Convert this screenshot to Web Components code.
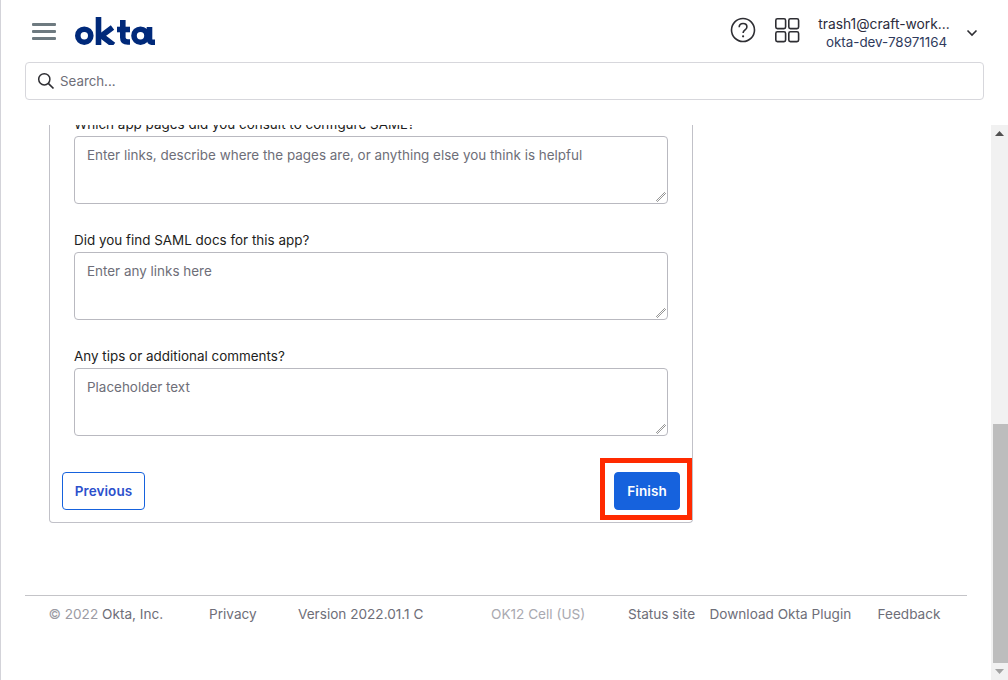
<!DOCTYPE html>
<html lang="en"><head><meta charset="utf-8"><title>Okta</title>
<style>
html,body{margin:0;height:100%;background:#fff;overflow:hidden}
body{font-family:Inter,"Liberation Sans",sans-serif;font-size:14px;color:#1d1d21}
</style></head><body>
<okta-app>
  <okta-header slot="header"></okta-header>
  <okta-scroll-area slot="main">
    <okta-card>
      <okta-field label="Which app pages did you consult to configure SAML?" placeholder="Enter links, describe where the pages are, or anything else you think is helpful"></okta-field>
      <okta-field label="Did you find SAML docs for this app?" placeholder="Enter any links here"></okta-field>
      <okta-field label="Any tips or additional comments?" placeholder="Placeholder text"></okta-field>
      <okta-actions></okta-actions>
    </okta-card>
    <okta-footer></okta-footer>
  </okta-scroll-area>
</okta-app>
<script>
function def(name,html){
  customElements.define(name,class extends HTMLElement{
    connectedCallback(){
      if(this.shadowRoot)return;
      const r=this.attachShadow({mode:'open'});
      r.innerHTML=typeof html==='function'?html(this):html;
    }
  });
}
def('okta-app',`<style>
:host{display:flex;flex-direction:column;height:680px;border-left:1px solid #d3d3d9;box-sizing:border-box;overflow:hidden}
</style><slot name="header"></slot><slot name="main"></slot>`);

def('okta-header',`<style>
:host{display:block;flex:none;height:125px;background:#fff}
.top{display:flex;align-items:center;height:62px;box-sizing:border-box;padding:0 24px 0 30px}
.burger{width:26px;height:20px;display:block;margin-right:18px}
.logo{display:block;width:81px;height:28px}
.sp{flex:1}
.help{width:26px;height:26px;display:block;margin:-2px 18px 0 0}
.grid{width:26px;height:26px;display:block;margin:-2px 13px 0 0}
.user{width:146px;display:flex;flex-direction:column;align-items:center;line-height:18px;color:#2f3a5c;margin-top:3px;padding-right:4px;box-sizing:border-box}
.user span:first-child{color:#2c2c3c;font-size:13.800px}
.user span:last-child{font-size:13.400px;padding-left:5px}
.chev{width:12px;height:8px;display:block;margin:3px 6px 0 7px}
.search{display:flex;align-items:center;height:38px;margin:0 24px;box-sizing:border-box;border:1px solid #d7d7dc;border-radius:4px;padding-left:11px;color:#6e6e78}
.search svg{width:18px;height:18px;display:block;margin-right:5px}
.search span{font-size:13.300px}
</style>
<div class="top">
<svg class="burger" viewBox="0 0 26 20"><g fill="#6e7a80"><rect x="1" y="2" width="24" height="3" rx="1"/><rect x="1" y="9" width="24" height="3" rx="1"/><rect x="1" y="16" width="24" height="3" rx="1"/></g></svg>
<svg class="logo" viewBox="0 0 81 28"><g fill="none" stroke="#00297a" stroke-width="5.600"><circle cx="9.300" cy="18.700" r="6.500"/><path d="M23.500 0V28"/><path d="M37.500 10.500L26.500 18.800 38.500 28"/><path d="M47.800 3V20.500q0 4.500 5 4.500h2.200"/><path d="M42 12.500H55"/><circle cx="65.500" cy="18.700" r="6.500"/><path d="M74.500 10V22q0 3.300 3.300 3.300H80"/></g></svg>
<div class="sp"></div>
<svg class="help" viewBox="0 0 26 26"><circle cx="13" cy="13" r="11.500" fill="none" stroke="#2e2e33" stroke-width="1.600"/><path d="M9.200 10.200c0-2.300 1.700-3.700 3.900-3.700s3.800 1.400 3.800 3.400c0 3-3.800 3-3.800 6.200" fill="none" stroke="#2e2e33" stroke-width="1.600"/><circle cx="13.100" cy="19.300" r="1.100" fill="#2e2e33"/></svg>
<svg class="grid" viewBox="0 0 26 26"><g fill="none" stroke="#2e2e33" stroke-width="1.600"><rect x="1.800" y="1.800" width="9.800" height="9.800" rx="1.600"/><rect x="14.800" y="1.800" width="9.800" height="9.800" rx="1.600"/><rect x="1.800" y="14.800" width="9.800" height="9.800" rx="1.600"/><rect x="14.800" y="14.800" width="9.800" height="9.800" rx="1.600"/></g></svg>
<div class="user"><span>trash1@craft-work...</span><span>okta-dev-78971164</span></div>
<svg class="chev" viewBox="0 0 12 8"><path d="M1.500 1.500L6 6l4.500-4.500" fill="none" stroke="#2e2e33" stroke-width="1.600"/></svg>
</div>
<div class="search">
<svg viewBox="0 0 18 18"><circle cx="7.300" cy="7.300" r="5.600" fill="none" stroke="#2e2e33" stroke-width="1.500"/><path d="M11.300 11.300L16.500 16.500" stroke="#2e2e33" stroke-width="1.700"/></svg>
<span>Search...</span>
</div>`);

def('okta-scroll-area',`<style>
:host{display:flex;flex:1;min-height:0;overflow:hidden}
.view{flex:1;min-width:0;overflow:hidden;padding:0 24px}
.bar{flex:none;width:17px;background:#f1f1f1;display:flex;flex-direction:column;box-sizing:border-box}
.arrow{height:17px;display:flex;align-items:center;justify-content:center;flex:none}
.arrow svg{width:9px;height:5px;display:block}
.gap{flex:1;min-height:0;display:flex;flex-direction:column;justify-content:flex-end}
.thumb{height:239px;margin-left:2px;background:#bdbdbd}
</style>
<div class="view"><slot></slot></div>
<div class="bar">
<div class="arrow"><svg viewBox="0 0 9 5"><path d="M0 5L4.500 0 9 5z" fill="#505050"/></svg></div>
<div class="gap"><div class="thumb"></div></div>
<div class="arrow"><svg viewBox="0 0 9 5"><path d="M0 0L4.500 5 9 0z" fill="#a3a3a3"/></svg></div>
</div>`);

def('okta-card',`<style>
:host{display:block;box-sizing:border-box;width:644px;margin-left:24px;margin-top:-12px;border:1px solid #c1c1c8;border-top:0;border-radius:0 0 4px 4px;padding:0 24px 12px}
</style><slot></slot>`);

def('okta-field',h=>`<style>
:host{display:block;margin-bottom:25px}
label{display:block;font-size:13.450px;line-height:22px;color:#1d1d21;height:23px}
.box{position:relative;box-sizing:border-box;height:68px;border:1px solid #b9b9c0;border-radius:4px;padding:8px 12px;font-size:13.450px;line-height:20px;color:#6e6e78}
svg{position:absolute;right:1px;bottom:1px;width:10px;height:10px;display:block}
</style>
<label>${h.getAttribute('label')}</label>
<div class="box" role="textbox">${h.getAttribute('placeholder')}<svg viewBox="0 0 10 10"><path d="M.5 8.500L8.500.5M1.500 9.500L9.500 1.500" stroke="#444" stroke-width="1" stroke-dasharray="1 .5"/></svg></div>`);

def('okta-actions',`<style>
:host{display:flex;justify-content:space-between;align-items:center;margin:36px -12px 0;position:relative}
button{font:600 13.500px Inter,"Liberation Sans",sans-serif;height:38px;border-radius:4px;box-sizing:border-box;padding:0;letter-spacing:.1px}
.prev{background:#fff;border:1px solid #1662dd;color:#2c50cc;width:83px}
.wrap{position:relative}
.next{background:#1662dd;border:1px solid #1662dd;color:#fff;width:66px;display:block}
.mark{position:absolute;left:-14px;top:-14px;width:92px;height:62px;box-sizing:border-box;border:5px solid #ff2a00}
</style>
<button class="prev">Previous</button>
<div class="wrap"><button class="next">Finish</button><div class="mark"></div></div>`);

def('okta-footer',`<style>
:host{display:flex;box-sizing:border-box;margin-top:72px;height:60px;border-top:1px solid #c4c4c8;align-items:flex-start;padding-top:8px;font-size:13.600px;line-height:20px;color:#6e6e78}
span{white-space:nowrap}
.c{margin-left:23.500px;width:160.500px;color:#9b9ba3}
.c b{font-weight:400;color:#6e6e78}
.p{width:89px}
.v{width:193px}
.o{width:137px;color:#a9a9b0}
.s{width:81.500px}
.d{width:168px}
</style>
<span class="c">© 2022 <b>Okta, Inc.</b></span><span class="p">Privacy</span><span class="v">Version 2022.01.1 C</span><span class="o">OK12 Cell (US)</span><span class="s">Status site</span><span class="d">Download Okta Plugin</span><span class="f">Feedback</span>`);
</script>
</body></html>
